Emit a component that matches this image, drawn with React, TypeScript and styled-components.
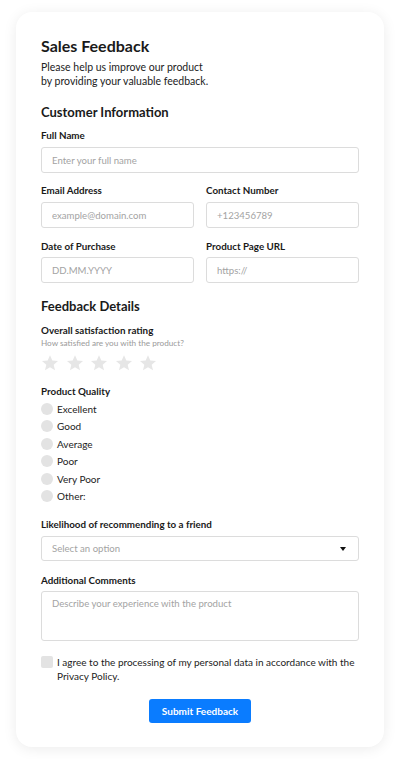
import React from 'react';
import styled, { createGlobalStyle } from 'styled-components';

const GlobalStyle = createGlobalStyle`
  * { box-sizing: border-box; }
  body {
    margin: 0;
    background: #ffffff;
    font-family: Lato, "Noto Sans", sans-serif;
    color: #1a1a1a;
  }
`;

const Page = styled.div`
  padding: 12px 16px 13px;
`;

const Card = styled.form`
  background: #fff;
  border-radius: 16px;
  box-shadow: 0 2px 14px rgba(0, 0, 0, 0.08);
  padding: 24px 25px 24px;
  display: flex;
  flex-direction: column;
`;

const Title = styled.h1`
  margin: 0;
  font-size: 16px;
  font-weight: 700;
  line-height: 20px;
`;

const Intro = styled.p`
  margin: 4px 0 0;
  font-size: 10.5px;
  line-height: 14px;
  color: #222;
`;

const SectionTitle = styled.h2<{ $top: number }>`
  margin: ${(p) => p.$top}px 0 0;
  font-size: 13px;
  font-weight: 700;
  line-height: 18px;
`;

const Field = styled.div<{ $top?: number }>`
  display: flex;
  flex-direction: column;
  margin-top: ${(p) => p.$top ?? 11}px;
  min-width: 0;
`;

const Row = styled.div`
  display: grid;
  grid-template-columns: 1fr 1fr;
  column-gap: 12px;
`;

const Label = styled.label<{ $gap?: number }>`
  font-size: 9.8px;
  font-weight: 700;
  line-height: 12px;
  color: #1a1a1a;
  margin-bottom: ${(p) => p.$gap ?? 6}px;
`;

const Hint = styled.span`
  font-size: 8.2px;
  line-height: 11px;
  color: #9a9a9a;
  margin-top: -4.5px;
  margin-bottom: 5px;
`;

const Input = styled.input`
  height: 26px;
  width: 100%;
  border: 1px solid #dcdcdc;
  border-radius: 3px;
  padding: 0 10px;
  font-family: inherit;
  font-size: 9.6px;
  color: #333;
  &::placeholder { color: #a3a3a3; }
`;

const TextArea = styled.textarea`
  height: 50px;
  width: 100%;
  border: 1px solid #dcdcdc;
  border-radius: 3px;
  padding: 6px 10px;
  font-family: inherit;
  font-size: 9.6px;
  resize: none;
  &::placeholder { color: #a3a3a3; }
`;

const SelectBox = styled.div`
  height: 25px;
  border: 1px solid #dcdcdc;
  border-radius: 3px;
  padding: 0 12px 0 10px;
  display: flex;
  align-items: center;
  justify-content: space-between;
  font-size: 9.6px;
  color: #a3a3a3;
`;

const Caret = styled.span`
  width: 0;
  height: 0;
  border-left: 3.5px solid transparent;
  border-right: 3.5px solid transparent;
  border-top: 4px solid #111;
`;

const Stars = styled.div`
  display: flex;
  gap: 6.5px;
`;

const RadioList = styled.div`
  display: flex;
  flex-direction: column;
  gap: 5.6px;
`;

const Option = styled.label`
  display: flex;
  align-items: center;
  gap: 4px;
  font-size: 10px;
  line-height: 12px;
  color: #222;
`;

const RadioDot = styled.span`
  width: 12px;
  height: 12px;
  border-radius: 50%;
  background: #e3e3e3;
  flex-shrink: 0;
`;

const Consent = styled.label`
  display: flex;
  align-items: flex-start;
  gap: 4px;
  margin-top: 14px;
  font-size: 10px;
  line-height: 14px;
  color: #222;
`;

const CheckBox = styled.span`
  width: 12px;
  height: 12px;
  border-radius: 2px;
  background: #e3e3e3;
  flex-shrink: 0;
  margin-top: 1px;
`;

const Submit = styled.button`
  align-self: center;
  margin-top: 16px;
  height: 24px;
  width: 102px;
  padding: 0;
  border: none;
  border-radius: 3px;
  background: #0a7cff;
  color: #fff;
  font-family: inherit;
  font-size: 10px;
  font-weight: 700;
`;

const Star = () => (
  <svg width="18" height="18" viewBox="0 0 24 24">
    <path
      d="M12 1.5l3.1 7 7.6.7-5.8 5 1.8 7.4L12 17.7l-6.7 3.9 1.8-7.4-5.8-5 7.6-.7z"
      fill="#e6e6e6"
    />
  </svg>
);

const qualities = ['Excellent', 'Good', 'Average', 'Poor', 'Very Poor', 'Other:'];

function App() {
  return (
    <Page>
      <GlobalStyle />
      <Card onSubmit={(e) => e.preventDefault()}>
        <Title>Sales Feedback</Title>
        <Intro>
          Please help us improve our product
          <br />
          by providing your valuable feedback.
        </Intro>

        <SectionTitle $top={15}>Customer Information</SectionTitle>
        <Field $top={8}>
          <Label>Full Name</Label>
          <Input placeholder="Enter your full name" />
        </Field>
        <Row>
          <Field>
            <Label>Email Address</Label>
            <Input placeholder="example@domain.com" />
          </Field>
          <Field>
            <Label>Contact Number</Label>
            <Input placeholder="+123456789" />
          </Field>
        </Row>
        <Row>
          <Field $top={12}>
            <Label $gap={5}>Date of Purchase</Label>
            <Input placeholder="DD.MM.YYYY" />
          </Field>
          <Field $top={12}>
            <Label $gap={5}>Product Page URL</Label>
            <Input placeholder="https://" />
          </Field>
        </Row>

        <SectionTitle $top={14}>Feedback Details</SectionTitle>
        <Field $top={9}>
          <Label>Overall satisfaction rating</Label>
          <Hint>How satisfied are you with the product?</Hint>
          <Stars>
            {[0, 1, 2, 3, 4].map((i) => (
              <Star key={i} />
            ))}
          </Stars>
        </Field>
        <Field $top={13}>
          <Label>Product Quality</Label>
          <RadioList>
            {qualities.map((q) => (
              <Option key={q}>
                <RadioDot />
                {q}
              </Option>
            ))}
          </RadioList>
        </Field>

        <Field $top={16}>
          <Label>Likelihood of recommending to a friend</Label>
          <SelectBox>
            Select an option
            <Caret />
          </SelectBox>
        </Field>
        <Field $top={13}>
          <Label $gap={5}>Additional Comments</Label>
          <TextArea placeholder="Describe your experience with the product" />
        </Field>

        <Consent>
          <CheckBox />
          <span>
            I agree to the processing of my personal data in accordance with the
            Privacy Policy.
          </span>
        </Consent>

        <Submit type="submit">Submit Feedback</Submit>
      </Card>
    </Page>
  );
}

export default App;
